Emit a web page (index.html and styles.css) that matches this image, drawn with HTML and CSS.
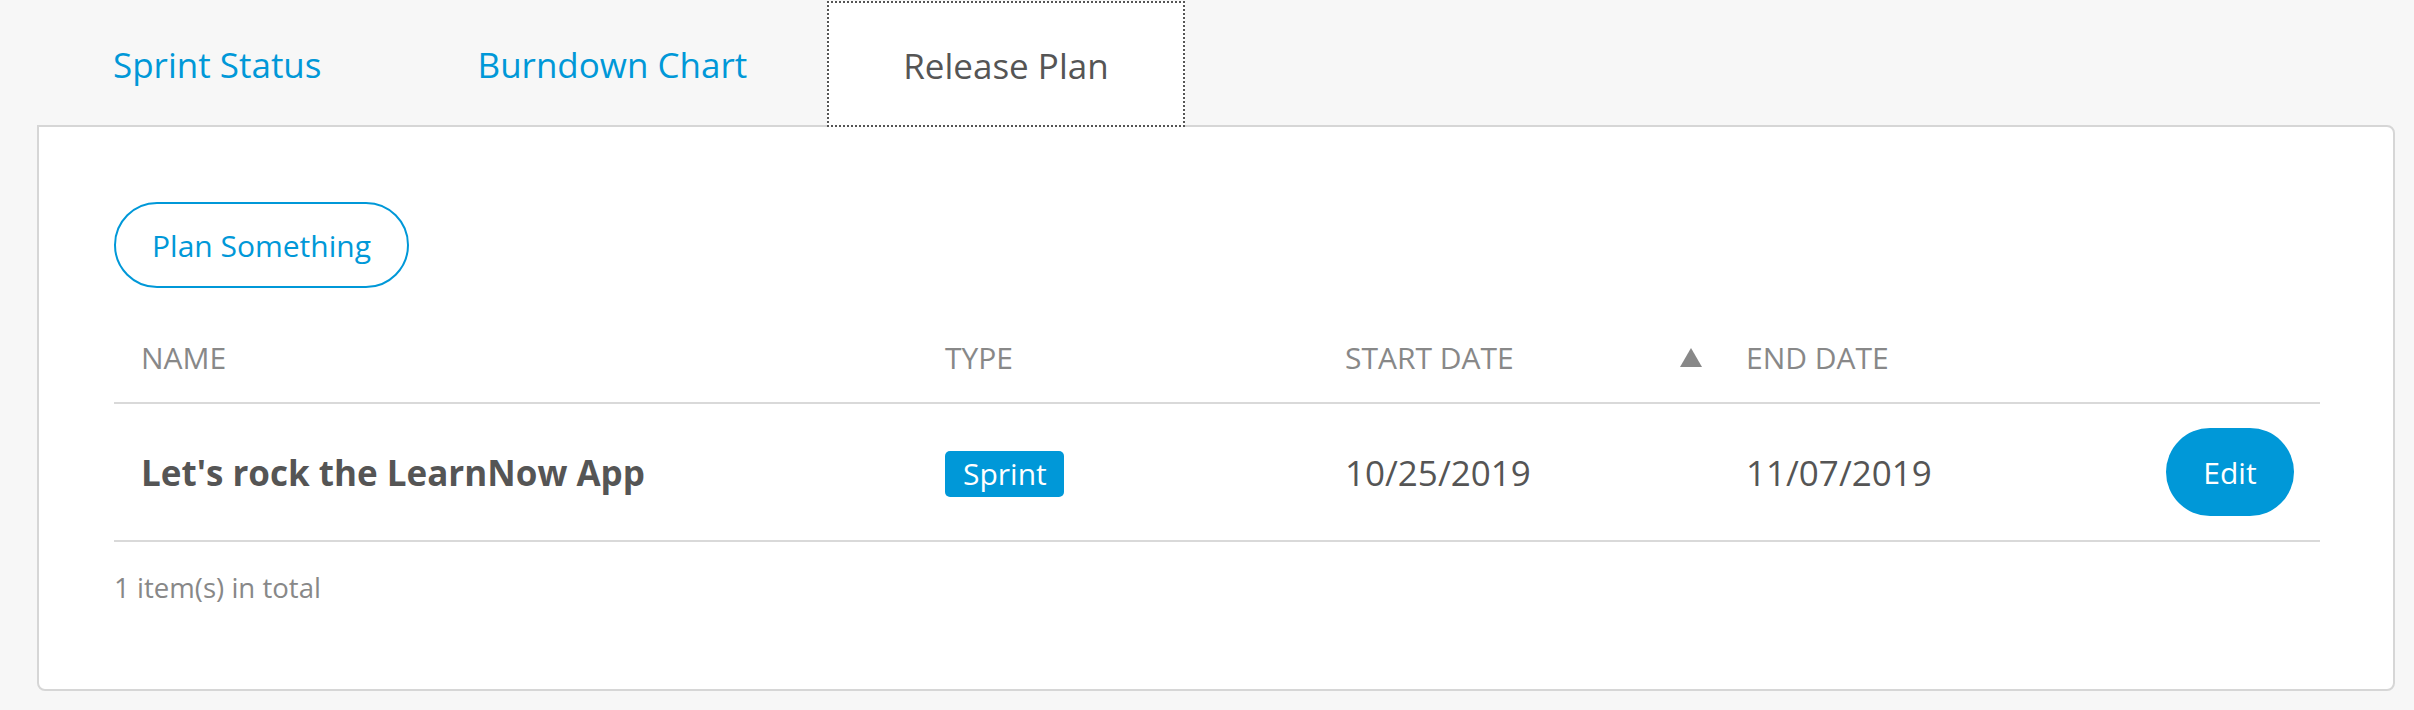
FILE: index.html
```html
<!DOCTYPE html>
<html lang="en">
<head>
<meta charset="utf-8">
<title>Release Plan</title>
<link rel="stylesheet" href="styles.css">
</head>
<body>
<div class="page">
  <nav class="tabs">
    <a class="tab">Sprint Status</a>
    <a class="tab">Burndown Chart</a>
    <a class="tab tab-active">Release Plan</a>
  </nav>
  <section class="panel">
    <button class="btn-outline">Plan Something</button>
    <table class="grid">
      <colgroup>
        <col class="c-name"><col class="c-type"><col class="c-start"><col class="c-end"><col class="c-act">
      </colgroup>
      <thead>
        <tr>
          <th>NAME</th>
          <th>TYPE</th>
          <th><div class="sort"><span>START DATE</span><svg class="arrow" width="22" height="19" viewBox="0 0 22 19"><polygon points="11,0 22,19 0,19" fill="#888"/></svg></div></th>
          <th>END DATE</th>
          <th></th>
        </tr>
      </thead>
      <tbody>
        <tr>
          <td class="name">Let's rock the LearnNow App</td>
          <td><span class="badge">Sprint</span></td>
          <td>10/25/2019</td>
          <td>11/07/2019</td>
          <td class="act"><button class="btn-fill">Edit</button></td>
        </tr>
      </tbody>
    </table>
    <p class="total">1 item(s) in total</p>
  </section>
</div>
</body>
</html>
```
FILE: styles.css
```css
html, body {
  margin: 0;
  padding: 0;
  background: #f7f7f7;
  font-family: "Open Sans", "Noto Sans", sans-serif;
  color: #555;
}
.page {
  padding: 1px 19px 17px 37px;
}
.tabs {
  display: flex;
  gap: 4px;
  height: 124px;
}
.tab {
  display: flex;
  align-items: center;
  padding: 2px 76px 0;
  font-size: 35px;
  color: #0098d8;
  cursor: pointer;
  box-sizing: border-box;
}
.tab-active {
  color: #555;
  background: #fff;
  outline: 2px dotted #555;
  outline-offset: -2px;
  position: relative;
  z-index: 1;
  height: 126px;
}
.panel {
  background: #fff;
  border: 2px solid #d6d6d6;
  border-radius: 0 8px 8px 8px;
  padding: 75px 73px 0 75px;
  height: 566px;
  box-sizing: border-box;
}
.btn-outline {
  display: inline-flex;
  align-items: center;
  justify-content: center;
  height: 86px;
  width: 295px;
  border: 2px solid #0098d8;
  border-radius: 43px;
  background: #fff;
  color: #0098d8;
  font-family: inherit;
  font-size: 30px;
  padding: 0;
  box-sizing: border-box;
}
.grid {
  width: 100%;
  border-collapse: collapse;
  table-layout: fixed;
  margin-top: 24px;
}
.c-name { width: 804px; }
.c-type { width: 400px; }
.c-start { width: 401px; }
.c-end { width: 420px; }
.grid th {
  text-align: left;
  font-weight: normal;
  font-size: 30px;
  color: #888;
  height: 90px;
  padding: 0 0 0 27px;
  border-bottom: 2px solid #d9d9d9;
  vertical-align: middle;
}
.sort {
  display: flex;
  align-items: center;
  justify-content: space-between;
  padding-right: 17px;
}
.arrow { display: block; }
.grid td {
  font-size: 35px;
  height: 136px;
  padding: 0 0 0 27px;
  border-bottom: 2px solid #d9d9d9;
  vertical-align: middle;
  color: #555;
}
.grid td.name {
  font-weight: bold;
}
.badge {
  display: inline-block;
  background: #0098d8;
  color: #fff;
  font-size: 30px;
  line-height: 46px;
  padding: 0 17px 0 18px;
  border-radius: 5px;
}
.grid td.act {
  text-align: right;
  padding-right: 26px;
}
.btn-fill {
  width: 128px;
  height: 88px;
  border: none;
  border-radius: 44px;
  background: #0098d8;
  color: #fff;
  font-family: inherit;
  font-size: 30px;
  padding: 0;
  vertical-align: middle;
}
.total {
  margin: 26px 0 0;
  font-size: 27.6px;
  color: #888;
}
```
